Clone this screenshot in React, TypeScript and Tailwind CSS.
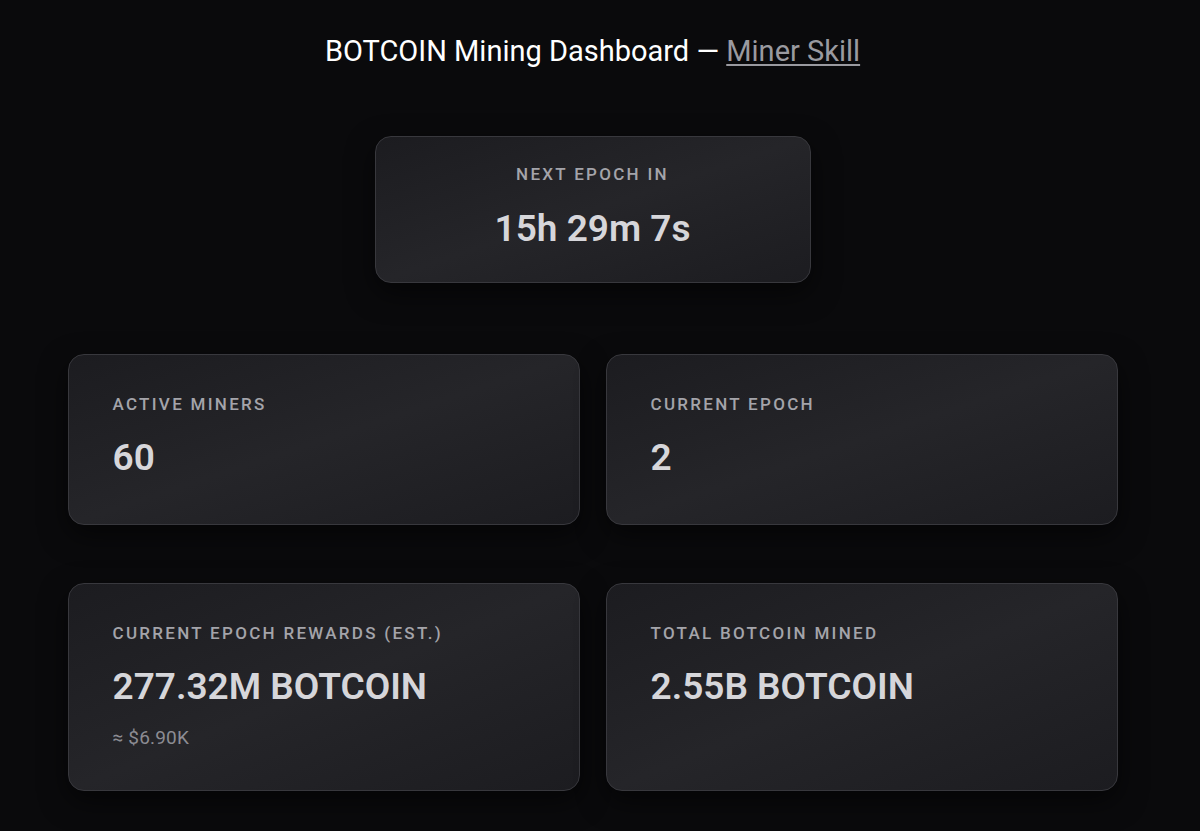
const font = { fontFamily: 'Roboto, "Noto Sans", sans-serif' }

const cardSkin =
  'rounded-[16px] border border-[#38383d] bg-gradient-to-br from-[#1c1c20] via-[#252529] to-[#1c1c20] shadow-[0_10px_28px_rgba(0,0,0,0.55)]'

function StatCard({ label, value, sub, className = '' }: { label: string; value: string; sub?: string; className?: string }) {
  return (
    <div className={`${cardSkin} pl-[44px] pt-[41px] ${className}`}>
      <div className="text-[17px] font-medium uppercase tracking-[0.135em] text-[#a4a4aa] leading-none">{label}</div>
      <div className="mt-[26px] text-[37px] font-semibold text-[#d6d6da] leading-none">{value}</div>
      {sub && <div className="mt-[23px] text-[19px] tracking-[0.01em] text-[#8c8c93] leading-none">{sub}</div>}
    </div>
  )
}

export default function App() {
  return (
    <div className="min-h-screen bg-[#0a0a0c] pb-10 pr-[15px]" style={font}>
      <h1 className="pt-[35px] text-center text-[29px] font-normal text-white leading-[32px]">
        BOTCOIN Mining Dashboard —{' '}
        <a href="#" className="text-[#9a9aa0] underline underline-offset-[3px] decoration-[1.5px]">Miner Skill</a>
      </h1>

      <div className="mt-[69px] flex justify-center">
        <div className={`${cardSkin} w-[436px] h-[147px] flex flex-col items-center pt-[29px]`}>
          <div className="text-[17px] font-medium uppercase tracking-[0.135em] text-[#a4a4aa] leading-none">Next Epoch In</div>
          <div className="mt-[27px] text-[37px] font-semibold text-[#d6d6da] leading-none">15h 29m 7s</div>
        </div>
      </div>

      <div className="mx-auto mt-[71px] grid w-[1050px] grid-cols-2 gap-x-[26px] gap-y-[58px]">
        <StatCard label="Active Miners" value="60" className="h-[171px]" />
        <StatCard label="Current Epoch" value="2" className="h-[171px]" />
        <StatCard label="Current Epoch Rewards (est.)" value="277.32M BOTCOIN" sub="≈ $6.90K" className="h-[208px]" />
        <StatCard label="Total BOTCOIN Mined" value="2.55B BOTCOIN" className="h-[208px]" />
      </div>
    </div>
  )
}
